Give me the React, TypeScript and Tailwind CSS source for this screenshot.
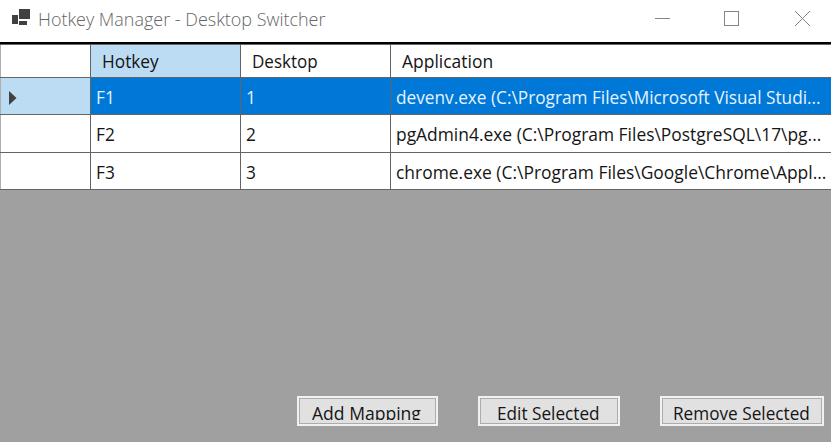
const rows = [
  { key: 'F1', desktop: '1', app: 'devenv.exe (C:\\Program Files\\Microsoft Visual Studi...', scale: 'scale-x-[0.957]' },
  { key: 'F2', desktop: '2', app: 'pgAdmin4.exe (C:\\Program Files\\PostgreSQL\\17\\pg...', scale: 'scale-x-[0.967]' },
  { key: 'F3', desktop: '3', app: 'chrome.exe (C:\\Program Files\\Google\\Chrome\\Appl...', scale: 'scale-x-[0.968]' },
];

const columns = 'grid grid-cols-[90px_150px_150px_1fr] grid-rows-[100%]';
const line = 'border-[#646464]';

function Label({ text, scale = 'scale-x-[0.96]' }: { text: string; scale?: string }) {
  return <span className={`inline-block origin-left whitespace-nowrap ${scale}`}>{text}</span>;
}

function TitleBar() {
  return (
    <header className="flex h-[42px] items-start bg-white text-[#666666]">
      <svg className="ml-[11px] mt-[8px] h-[18px] w-[20px] shrink-0" viewBox="0 0 20 18">
        <path d="M1 7h6v9H1zM8 1h11v10H8zM8 13h8v4H8z" fill="#404040" />
      </svg>
      <h1 className="ml-[7px] mt-[6px] h-[26px] flex-1 text-[18px] font-light leading-[26px]">
        <Label text="Hotkey Manager - Desktop Switcher" scale="scale-x-[0.997]" />
      </h1>
      <svg className="h-[42px] w-[176px] shrink-0" viewBox="0 0 176 42" fill="none" stroke="#858585" shapeRendering="crispEdges">
        <path d="M0 18.5h15M69.5 11.5h14v14h-14z" />
        <path d="M140 11l15 15M155 11l-15 15" shapeRendering="auto" />
      </svg>
    </header>
  );
}

type ActionButtonProps = { text: string; box: string; clip?: string; scale?: string };

function ActionButton({ text, box, clip = 'h-[25px]', scale = 'scale-x-[0.955]' }: ActionButtonProps) {
  return (
    <button className={`h-[30px] border-2 border-[#f1f1f1] bg-[#e1e1e1] ${box}`}>
      <span className="block h-full border border-[#acacac] pt-px">
        <span className={`block text-left leading-[27px] ${clip}`}>
          <Label text={text} scale={scale} />
        </span>
      </span>
    </button>
  );
}

export default function App() {
  return (
    <div className="flex h-[442px] w-[831px] flex-col overflow-hidden bg-[#a0a0a0] text-[18px] text-[#151515] [font-family:'Open_Sans','Noto_Sans',sans-serif]">
      <TitleBar />
      <main className="flex flex-1 flex-col border-t-2 border-black">
        <section className="border-l border-l-[#c8c8c8]">
          <div className={`${columns} -ml-px h-[34px] border-y bg-white leading-[32px] ${line}`}>
            <div className="border-l border-l-[#b0b0b0]" />
            <div className={`border-l bg-[#bcdcf4] pl-[11px] ${line}`}><Label text="Hotkey" /></div>
            <div className={`border-l pl-[11px] ${line}`}><Label text="Desktop" scale="scale-x-[0.945]" /></div>
            <div className={`border-l pl-[11px] ${line}`}><Label text="Application" scale="scale-x-[0.97]" /></div>
          </div>
          {rows.map((row, i) => (
            <div
              key={row.key}
              className={`${columns} -ml-px border-b leading-[38px] ${line} ${i === 1 ? 'h-[38px]' : 'h-[37px]'} ${i === 0 ? 'bg-[#0078d7] text-[#e4f3ff]' : 'bg-white'}`}
            >
              <div className={`flex items-center border-l border-l-[#b0b0b0] ${i === 0 ? 'bg-[#bcdcf4]' : ''}`}>
                {i === 0 && (
                  <svg className="ml-[8px] mt-[4px] h-[14px] w-[8px]" viewBox="0 0 8 14">
                    <path d="M0 0l7.5 7L0 14z" fill="#404040" />
                  </svg>
                )}
              </div>
              <div className={`border-l pl-[5px] ${line}`}><Label text={row.key} /></div>
              <div className={`border-l pl-[5px] ${line}`}><Label text={row.desktop} /></div>
              <div className={`border-l pl-[5px] ${line}`}><Label text={row.app} scale={row.scale} /></div>
            </div>
          ))}
        </section>
        <footer className="mb-4 mt-auto flex justify-end pr-[7px]">
          <ActionButton text="Add Mapping" box="w-[141px] [&>span]:pl-3" clip="h-[20px] overflow-hidden" scale="scale-x-[0.975]" />
          <ActionButton text="Edit Selected" box="ml-10 w-[142px] [&>span]:pl-4" />
          <ActionButton text="Remove Selected" box="ml-10 w-[164px] [&>span]:pl-2.5" />
        </footer>
      </main>
    </div>
  );
}
